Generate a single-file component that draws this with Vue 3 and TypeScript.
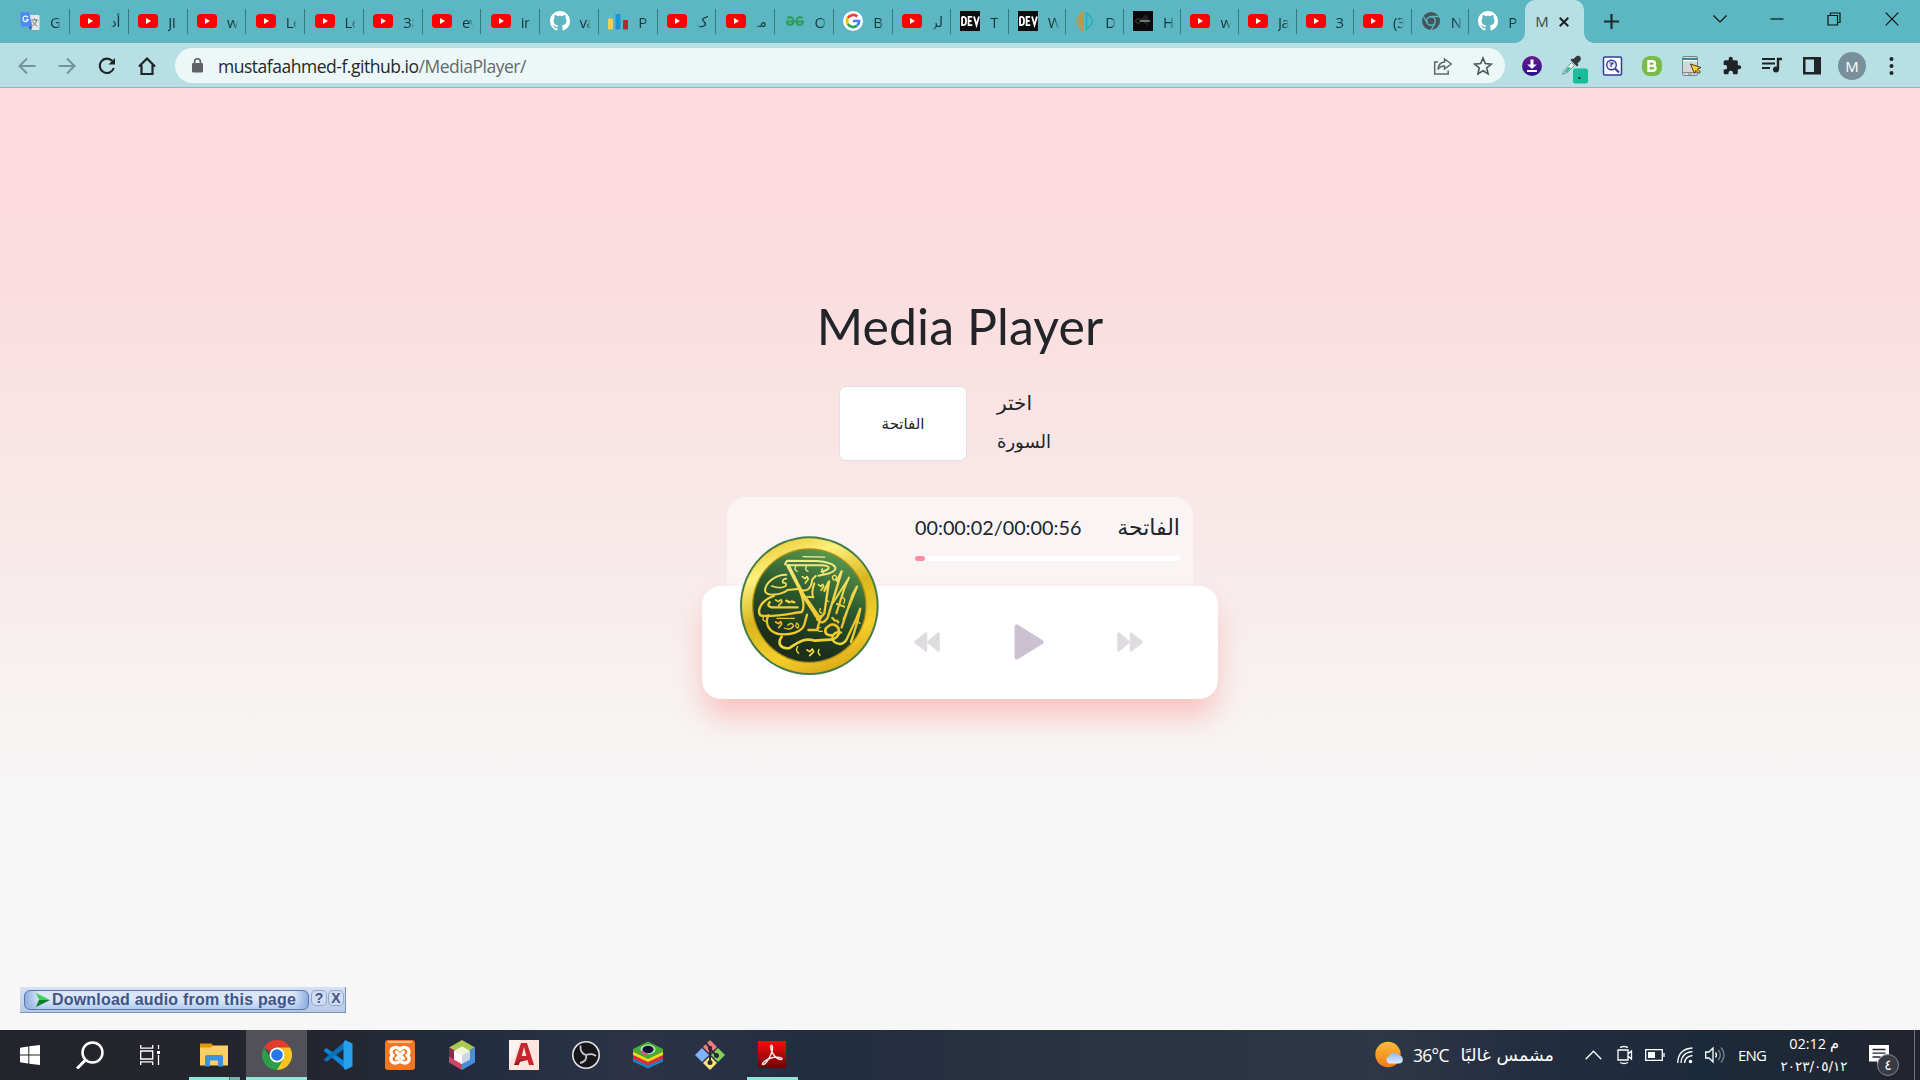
<script setup lang="ts">
interface Tab {
  icon: string
  label: string
  rtl?: boolean
}

const yt = (label: string, rtl = false): Tab => ({ icon: 'youtube', label, rtl })

const wideTabs: Tab[] = [
  yt('أد', true),
  yt('JI'),
  yt('w'),
  yt('Le'),
  yt('Le'),
  yt('38'),
  yt('ev'),
  yt('ir'),
  { icon: 'github', label: 'va' },
  { icon: 'bars', label: 'P' },
  yt('ک', true),
  yt('مـ', true),
  { icon: 'geeks', label: 'O' },
  { icon: 'google', label: 'B' },
  yt('لر', true),
]

const narrowTabs: Tab[] = [
  { icon: 'dev', label: 'T' },
  { icon: 'dev', label: 'W' },
  { icon: 'dd', label: 'D' },
  { icon: 'dark', label: 'H' },
  yt('w'),
  yt('Ja'),
  yt('3'),
  yt('(3'),
  { icon: 'chromegray', label: 'N' },
]

const extensions: string[] = ['download', 'dropper', 'inspect', 'bee', 'clicker', 'puzzle', 'queue', 'panel']

const apps: { icon: string; state?: string }[] = [
  { icon: 'explorer', state: 'grouped' },
  { icon: 'chrome', state: 'active' },
  { icon: 'vscode' },
  { icon: 'xampp' },
  { icon: 'netbeans' },
  { icon: 'autocad' },
  { icon: 'obs' },
  { icon: 'bluestacks' },
  { icon: 'git' },
  { icon: 'acrobat', state: 'open' },
]

const progress = 3.8
</script>

<template>
  <svg class="defs" width="0" height="0" aria-hidden="true">
    <defs>
      <linearGradient id="gold" x1="0.2" y1="0" x2="0.6" y2="1">
        <stop offset="0" stop-color="#e9c62d" />
        <stop offset="0.22" stop-color="#fdf17c" />
        <stop offset="0.5" stop-color="#d8b71d" />
        <stop offset="0.8" stop-color="#f5cf2b" />
        <stop offset="1" stop-color="#dfab1a" />
      </linearGradient>
      <linearGradient id="leaf" x1="0.7" y1="0" x2="0.4" y2="0.85">
        <stop offset="0" stop-color="#5b9c50" />
        <stop offset="0.5" stop-color="#2c5a2e" />
        <stop offset="1" stop-color="#1c2f1a" />
      </linearGradient>
      <linearGradient id="ink" gradientUnits="userSpaceOnUse" x1="0" y1="90" x2="0" y2="390">
        <stop offset="0" stop-color="#f4ee9a" />
        <stop offset="0.35" stop-color="#f3d84a" />
        <stop offset="0.7" stop-color="#ecc02c" />
        <stop offset="1" stop-color="#efe53c" />
      </linearGradient>
      <linearGradient id="sun" x1="0" y1="0" x2="0" y2="1">
        <stop offset="0" stop-color="#f9bd36" />
        <stop offset="1" stop-color="#f27a1a" />
      </linearGradient>
      <linearGradient id="cloud" x1="0" y1="0" x2="0" y2="1">
        <stop offset="0" stop-color="#8db8f0" />
        <stop offset="1" stop-color="#e2edfb" />
      </linearGradient>
      <linearGradient id="violet" x1="0" y1="0" x2="0" y2="1">
        <stop offset="0" stop-color="#6a1b8a" />
        <stop offset="1" stop-color="#2a1291" />
      </linearGradient>
      <linearGradient id="red" x1="0" y1="0" x2="0" y2="1">
        <stop offset="0" stop-color="#f40d0d" />
        <stop offset="1" stop-color="#6c0306" />
      </linearGradient>
    </defs>

    <symbol id="translate" viewBox="0 0 20 20">
      <path d="M9 4h9.500q1 0 1 1v13q0 1-1 1H12z" fill="#e4e6e8" />
      <path d="M1.500 1h7.500l3.500 14.500H2q-1.500 0-1.500-1.500V2q0-1 1-1" fill="#4b8bf5" />
      <path d="M8.500 15.500h4l-2.500 3.500z" fill="#3357c2" />
      <path d="M8 6.400A2.700 2.700 0 1 0 8.300 8.600H5.900" stroke="#fff" stroke-width="1.200" fill="none" />
      <path d="M11.500 9h6.500M14.700 7.600V9M16.800 9c-.7 3-2.500 4.800-4 5.500M12.800 10.500c1 2 2.400 3.500 4.400 4.500" stroke="#6d7478" stroke-width="1" fill="none" />
    </symbol>
    <symbol id="youtube" viewBox="0 0 20 20">
      <rect x="0" y="3" width="20" height="14" rx="3.500" fill="#f00" />
      <path d="M8 7l5 3-5 3z" fill="#fff" />
    </symbol>
    <symbol id="github" viewBox="0 0 16 16">
      <path fill="#fff" d="M8 0C3.580 0 0 3.580 0 8c0 3.540 2.290 6.530 5.470 7.590.4.070.550-.170.550-.380 0-.190-.010-.820-.010-1.490-2.010.370-2.530-.490-2.690-.940-.090-.230-.480-.940-.820-1.130-.280-.150-.680-.520-.010-.530.630-.010 1.080.580 1.230.820.720 1.210 1.870.870 2.330.660.070-.520.280-.870.510-1.070-1.780-.2-3.640-.890-3.640-3.950 0-.870.310-1.590.820-2.150-.080-.2-.360-1.020.080-2.120 0 0 .670-.210 2.200.820.640-.180 1.320-.270 2-.270s1.360.090 2 .270c1.530-1.040 2.200-.820 2.200-.820.440 1.100.160 1.920.080 2.120.510.560.820 1.270.820 2.150 0 3.070-1.870 3.750-3.650 3.950.290.250.540.730.540 1.480 0 1.070-.010 1.930-.010 2.200 0 .210.150.460.550.380A8.010 8.010 0 0 0 16 8c0-4.420-3.580-8-8-8z" />
    </symbol>
    <symbol id="bars" viewBox="0 0 20 20">
      <rect x="0" y="7.500" width="5" height="11" rx="1" fill="#f6cf52" />
      <rect x="7.500" y="3" width="5" height="15.500" rx="1" fill="#1a94d6" />
      <rect x="15" y="9" width="5" height="9.500" rx="1" fill="#b8242c" />
    </symbol>
    <symbol id="geeks" viewBox="0 0 20 20">
      <path d="M2.500 7.300Q5 5 7.300 7.200Q8.700 8.800 8.500 10.500Q8 14 5 13.900Q2 13.800 2 10.500H18Q18 13.800 15 13.900Q12 14 11.500 10.500Q11.300 8.800 12.700 7.200Q15 5 17.500 7.300" fill="none" stroke="#2f9b5d" stroke-width="2" />
    </symbol>
    <symbol id="google" viewBox="0 0 20 20">
      <circle cx="10" cy="10" r="10" fill="#fff" />
      <path d="M4.800 7A6.200 6.200 0 0 1 14.300 5.600" fill="none" stroke="#ea4335" stroke-width="2.700" />
      <path d="M4.800 7a6.200 6.200 0 0 0 0 6" fill="none" stroke="#fbbc05" stroke-width="2.700" />
      <path d="M4.800 13a6.200 6.200 0 0 0 9.300 1.600" fill="none" stroke="#34a853" stroke-width="2.700" />
      <path d="M14.100 14.600A6.200 6.200 0 0 0 16.100 10H10" fill="none" stroke="#4285f4" stroke-width="2.700" />
    </symbol>
    <symbol id="dev" viewBox="0 0 20 20">
      <path d="M0 0h20v20H0z" fill="#0b0d0d" />
      <path d="M2 5.800V14.200H3Q6 14.200 6 11V9Q6 5.800 3 5.800H2M12.300 5.800H8.600V14.200H12.300M8.600 10H11.600M14 5.500L16.500 14L19 5.500" fill="none" stroke="#fff" stroke-width="1.800" />
    </symbol>
    <symbol id="dd" viewBox="0 0 20 20">
      <path d="M8 .8Q2.300 6 2.300 10T8 19.200zM5.300 5v10" fill="none" stroke="#c4963c" stroke-width="1.600" />
      <path d="M11.500 1.500V18.500Q17.500 13 17.500 10T11.500 1.500" fill="none" stroke="#20b2bb" stroke-width="1.600" />
    </symbol>
    <symbol id="dark" viewBox="0 0 20 20">
      <path d="M0 0h20v20H0z" fill="#0a0a0c" />
      <path d="M7 9L13 3l2 3v9" fill="#212126" />
      <circle cx="5" cy="10" r="2.300" fill="none" stroke="#444" />
      <path d="M7 10h10" stroke="#999" stroke-width="1.400" />
    </symbol>
    <symbol id="chromegray" viewBox="0 0 20 20">
      <circle cx="10" cy="10" r="9" fill="#43555b" />
      <circle cx="10" cy="10" r="4.300" fill="none" stroke="#5cb7c2" stroke-width="1.400" />
      <path d="M10 5.500h8M6.200 12.300L2.500 5.500M14 12.300L10 19" stroke="#5cb7c2" stroke-width="1.300" />
    </symbol>

    <symbol id="download" viewBox="0 0 28 28">
      <circle cx="14" cy="14" r="10" fill="url(#violet)" />
      <path d="M12.500 7.500h3v5h3.200L14 17l-4.700-4.500h3.200zM9 18h10v2H9z" fill="#fff" />
    </symbol>
    <symbol id="dropper" viewBox="0 0 28 28" overflow="visible">
      <path d="M4.500 22.500l1.500-4L13.500 10.500l3 3L9 20.500z" fill="#e6f4f1" stroke="#7c8c90" />
      <path d="M6 20.500L10 15l3 1-4.500 4.500z" fill="#2cba9c" />
      <path d="M12.500 8l6.500 6.500 1.500-1.500-1-1.500 2.500-2.500c3-3.200-1.500-7-4.200-4.200L15.500 7 14 6.500z" fill="#333a3e" />
      <rect x="15" y="16.500" width="15" height="15" rx="2" fill="#1abc9c" />
      <path d="M20.500 25h2v2h-2z" fill="#123" />
    </symbol>
    <symbol id="inspect" viewBox="0 0 28 28">
      <rect x="5.500" y="5" width="18" height="18" rx="1.500" fill="#fff" stroke="#303b9d" stroke-width="1.500" />
      <circle cx="13.500" cy="13" r="4.800" fill="#e9ecff" stroke="#333c94" stroke-width="1.400" />
      <path d="M17 16.500l4 4" stroke="#333c94" stroke-width="2" />
      <path d="M11.500 11h3.500l-2 2v2" stroke="#303b9d" fill="none" stroke-width="1.200" />
    </symbol>
    <symbol id="bee" viewBox="0 0 28 28">
      <rect x="4" y="4" width="20" height="20" rx="8" fill="#78bb48" />
      <path d="M10.500 9.200h3.500q3 0 3 2.300t-3 2.400h-3.500zM10.500 13.900h4q3 0 3 2.400t-3 2.500h-4z" fill="none" stroke="#fff" stroke-width="2.400" />
    </symbol>
    <symbol id="clicker" viewBox="0 0 28 28">
      <rect x="4.500" y="4.500" width="15" height="19" rx="1.500" fill="#d3d7d9" stroke="#7b8388" />
      <path d="M5 6h14v2.500H5z" fill="#2f8f9b" />
      <path d="M5 8h14v1.200H5z" fill="#fff" />
      <path d="M5 20.500h14M10 22h4" stroke="#888" />
      <path d="M12.500 12l10.500 3.500-3.500 1.500 3 3-1.500 1.500-3-3-1.500 3z" fill="#ffcb2d" stroke="#3a3010" stroke-width=".9" />
    </symbol>
    <symbol id="puzzle" viewBox="0 0 24 24">
      <path fill="#202427" d="M20.500 11H19V7c0-1.100-.9-2-2-2h-4V3.500a2.500 2.500 0 0 0-5 0V5H4c-1.100 0-2 .9-2 2v3.800h1.500a2.700 2.700 0 0 1 0 5.400H2V20c0 1.100.9 2 2 2h3.800v-1.500a2.700 2.700 0 0 1 5.400 0V22H17c1.100 0 2-.9 2-2v-4h1.500a2.500 2.500 0 0 0 0-5" />
    </symbol>
    <symbol id="queue" viewBox="0 0 28 28">
      <path d="M4 7h13M4 11.500h13M4 16h8" stroke="#202427" stroke-width="2" />
      <path d="M24 7h-4v10" fill="none" stroke="#202427" stroke-width="2.400" />
      <circle cx="18" cy="17.500" r="3" fill="#202427" />
    </symbol>
    <symbol id="panel" viewBox="0 0 28 28">
      <path d="M5 5h18v17.500H5zm2.500 2.500V20H16V7.500z" fill="#202427" fill-rule="evenodd" />
    </symbol>

    <symbol id="explorer" viewBox="0 0 30 30">
      <path d="M1 3.500h11.500l1.500 2v5H1z" fill="#e29a04" />
      <path d="M1 7.500h11l2-2h15V25.500H1z" fill="#fdd061" />
      <path d="M6 25.500V17q0-2 2-2h14q2 0 2 2v9.500h-5V20.500h-8v6H6z" fill="#3b93df" />
    </symbol>
    <symbol id="chrome" viewBox="0 0 30 30">
      <path d="M15 15L2 7.500A15 15 0 0 1 28 7.500z" fill="#e33b2e" />
      <path d="M15 15V7.500H28A15 15 0 0 1 15 30z" fill="#fcc31e" />
      <path d="M15 15l6.500 3.750L15 30A15 15 0 0 1 2 7.500l6.500 11.250z" fill="#2c9e4b" />
      <circle cx="15" cy="15" r="7.500" fill="#fff" />
      <circle cx="15" cy="15" r="5.800" fill="#2678e8" />
    </symbol>
    <symbol id="vscode" viewBox="0 0 30 30">
      <path d="M.5 10.500l3-2.500 19 14v7z" fill="#0b86da" />
      <path d="M.5 19.500l3 2.500 19-14V1z" fill="#0b70b8" />
      <path d="M22 0l7.500 3.500v23L22 30l-1.500-3V3z" fill="#27a0ee" />
    </symbol>
    <symbol id="xampp" viewBox="0 0 30 30">
      <rect width="30" height="30" rx="3" fill="#f37623" />
      <path d="M3 2h24" stroke="#ffb98a" stroke-width="2" />
      <path d="M15 9.800C12.500 6 6 7 6 11.500C6 13.500 7 14.800 8 15.300C6 16.500 5.500 18.500 6.300 20.500C8 24.200 13.500 23.500 15 20C16.500 23.500 22 24.200 23.700 20.500C24.500 18.500 24 16.500 22 15.300C23 14.800 24 13.500 24 11.500C24 7 17.500 6 15 9.800M11.500 12L18.500 18.500M18.500 12L11.500 18.500" fill="none" stroke="#fff" stroke-width="3.300" stroke-linejoin="round" stroke-linecap="round" />
    </symbol>
    <symbol id="netbeans" viewBox="0 0 30 30">
      <path d="M15 0l13 7.500-13 7.500L2 7.500z" fill="#adc84f" />
      <path d="M2 7.500L15 15v15L2 22.500z" fill="#cf4767" />
      <path d="M2 7.500l5 3v9l-5-3z" fill="#8c2a50" />
      <path d="M28 7.500L15 15v15l13-7.500z" fill="#468fdc" />
      <path d="M15 6.500l8 4.500v8.500L15 24l-8-4.500V11z" fill="#cdd8de" />
      <path d="M15 6.500l8 4.500-8 4.500L7 11z" fill="#f1f4dc" />
      <path d="M7 11l8 4.500V24l-8-4.500z" fill="#fff" />
    </symbol>
    <symbol id="autocad" viewBox="0 0 30 30">
      <path d="M0 0h30v30H0z" fill="#fbe5de" />
      <path d="M0 0h12L3 20 0 19z" fill="#fff3ef" />
      <path d="M5 25L12 3h6l7 22h-5l-1.500-5h-7L10 25zM12.800 16h4.600L15 7z" fill="#c8262f" fill-rule="evenodd" />
      <path d="M5 25l6.500-5h7L10 22l-1 3z" fill="#8f131c" />
    </symbol>
    <symbol id="obs" viewBox="0 0 30 30">
      <circle cx="15" cy="15" r="13.200" fill="#17171a" stroke="#e4e4e6" stroke-width="1.600" />
      <path d="M9.500 5.500C9 11 11.500 14 15 15C19 14.500 21 12.500 25 16M15 15C16 19 14 22 9 23" fill="none" stroke="#c7c7ca" stroke-width="1.800" />
    </symbol>
    <symbol id="bluestacks" viewBox="0 0 30 30">
      <path d="M0 18l15 7L30 18v3.500l-15 7L0 21.500z" fill="#1586c9" />
      <path d="M0 15l15 7 15-7v3.500l-15 7L0 18.500z" fill="#e42a34" />
      <path d="M0 11.500l15 7 15-7v3.500l-15 7L0 15z" fill="#ffd61c" />
      <path d="M15 1.500L30 9v2.500l-15 7.500-15-7.500V9z" fill="#48ae33" />
      <ellipse cx="15" cy="9.500" rx="7.500" ry="5" fill="#b6dfb9" />
      <ellipse cx="15" cy="9.500" rx="5.500" ry="3.800" fill="#111237" />
      <path d="M8 11q3 4 7 3" stroke="#ef39a2" fill="none" stroke-width="1.500" />
    </symbol>
    <symbol id="git" viewBox="0 0 30 30">
      <path d="M15 0l7 7-7 7-7-7z" fill="#f07b7f" />
      <path d="M7 8l7 7-7 7-7-7z" fill="#80b3fb" />
      <path d="M23 8l7 7-7 7-7-7z" fill="#85d058" />
      <path d="M15 16l7 7-7 7-7-7z" fill="#ffe07a" />
      <path d="M11 3l4 5v15M15 9l6 6" stroke="#262b3b" stroke-width="2" fill="none" />
      <circle cx="15" cy="8" r="2.200" fill="#262b3b" /><circle cx="15" cy="22.500" r="2.500" fill="#262b3b" /><circle cx="21.500" cy="15.500" r="2.500" fill="#262b3b" />
    </symbol>
    <symbol id="acrobat" viewBox="0 0 30 30">
      <path d="M1 1h28v27H1z" fill="url(#red)" />
      <path d="M14 5.500C12.500 11 19 20 24.500 19.500C27 18 20 16 14 18C8 20 4 24 6 24.500C9 25 16 13 15.500 7Q15 4.500 14 5.500" fill="none" stroke="#fbeeee" stroke-width="1.400" />
    </symbol>
  </svg>

  <div class="desktop">
    <header class="browser">
      <div class="tabs">
        <div class="tab first">
          <svg class="favicon"><use href="#translate" /></svg>
          <span class="tab-label">G</span>
        </div>
        <div v-for="(t, i) in wideTabs" :key="'w' + i" class="tab wide">
          <svg class="favicon"><use :href="'#' + t.icon" /></svg>
          <span class="tab-label" :class="{ rtl: t.rtl }">{{ t.label }}</span>
        </div>
        <div v-for="(t, i) in narrowTabs" :key="'n' + i" class="tab narrow">
          <svg class="favicon"><use :href="'#' + t.icon" /></svg>
          <span class="tab-label">{{ t.label }}</span>
        </div>
        <div class="tab last">
          <svg class="favicon"><use href="#github" /></svg>
          <span class="tab-label">P</span>
        </div>
        <div class="tab-active">
          <span class="active-label">M</span>
          <svg width="10" height="10" viewBox="0 0 10 10"><path d="M.7.7l8.600 8.600M9.300.7L.7 9.300" stroke="#1c2226" stroke-width="2" /></svg>
        </div>
        <svg class="plus" width="15" height="15" viewBox="0 0 15 15"><path d="M7.500 0v15M0 7.500h15" stroke="#1b2b2f" stroke-width="2.200" /></svg>
        <div class="window-buttons">
          <svg viewBox="0 0 14 14"><path d="M.5 3.500l6.500 6.500 6.500-6.500" /></svg>
          <svg viewBox="0 0 14 14"><path d="M.5 7h13" stroke-width="1.200" /></svg>
          <svg viewBox="0 0 14 14"><path d="M1 3.500h9.500V13H1zM3.500 3.500V1H13v9.500h-2.500" /></svg>
          <svg viewBox="0 0 14 14"><path d="M.7.700l12.600 12.600M13.300.7L.7 13.300" /></svg>
        </div>
      </div>

      <div class="toolbar">
        <svg class="nav" viewBox="0 0 20 20"><path d="M18.500 10H3M10 2.500L2.500 10l7.500 7.500" fill="none" stroke="#75959a" stroke-width="2" /></svg>
        <svg class="nav" viewBox="0 0 20 20"><path d="M1.500 10H17M10 2.500l7.500 7.500-7.500 7.500" fill="none" stroke="#75959a" stroke-width="2" /></svg>
        <svg class="nav" viewBox="0 0 20 20">
          <path d="M16.800 12A7.200 7.200 0 1 1 15.300 5" fill="none" stroke="#202427" stroke-width="2.100" />
          <path d="M18 2V8.500H11.500z" fill="#202427" />
        </svg>
        <svg class="nav" viewBox="0 0 20 20"><path d="M2 10.500L10 2.500l8 8M4.500 9v9h11V9" fill="none" stroke="#202427" stroke-width="2.200" /></svg>
        <div class="omnibox">
          <svg width="11" height="15" viewBox="0 0 11 15"><rect y="5" width="11" height="9.500" rx="1.300" fill="#5f6368" /><path d="M2.600 6V3.700a2.900 2.900 0 0 1 5.800 0V6" fill="none" stroke="#5f6368" stroke-width="1.600" /></svg>
          <span class="url">mustafaahmed-f.github.io<span class="path">/MediaPlayer/</span></span>
          <svg class="share" width="20" height="20" viewBox="0 0 20 20"><path d="M5 6H1.700v12h13.500v-3.500M11.500 3l6.700 5-6.700 5v-3q-4.500 0-6.500 3.500q.5-7 6.500-7.500z" fill="none" stroke="#5f6368" stroke-width="1.500" /></svg>
          <svg class="star" width="20" height="20" viewBox="0 0 20 20"><path d="M10 2l2.300 5.600 6 .5-4.600 3.900 1.400 5.900L10 14.800l-5.100 3.100L6.300 12 1.700 8.100l6-.5z" fill="none" stroke="#4f5559" stroke-width="1.600" /></svg>
        </div>
        <div class="extensions">
          <span v-for="e in extensions" :key="e" class="ext"><svg :class="e"><use :href="'#' + e" /></svg></span>
          <span class="ext"><span class="avatar">M</span></span>
          <span class="ext"><svg viewBox="0 0 28 28"><g fill="#202427"><circle cx="13.500" cy="7" r="2" /><circle cx="13.500" cy="14" r="2" /><circle cx="13.500" cy="21" r="2" /></g></svg></span>
        </div>
      </div>
    </header>

    <main class="page">
      <h1>Media Player</h1>
      <div class="chooser">
        <div class="select">الفاتحة</div>
        <div class="prompt"><span class="choose">اختر</span><br />السورة</div>
      </div>

      <section class="player">
        <div class="info">
          <div class="info-row">
            <span class="time">00:00:02/00:00:56</span>
            <span class="track-name">الفاتحة</span>
          </div>
          <div class="track"><div class="fill" :style="{ width: progress + '%' }"></div></div>
        </div>
        <div class="controls">
          <svg width="26" height="20" viewBox="0 0 26 20"><path d="M12 1.500v17L1.500 10zM24.500 1.500v17L14.500 10z" fill="#e0dbe0" stroke="#e0dbe0" stroke-width="2.500" stroke-linejoin="round" /></svg>
          <svg width="30" height="36" viewBox="0 0 30 36"><path d="M3 3v30l24-15z" fill="#ccc1d0" stroke="#ccc1d0" stroke-width="5" stroke-linejoin="round" /></svg>
          <svg width="26" height="20" viewBox="0 0 26 20"><path d="M1.500 1.500v17L11.500 10zM14 1.500v17L24.500 10z" fill="#e0dbe0" stroke="#e0dbe0" stroke-width="2.500" stroke-linejoin="round" /></svg>
        </div>
        <svg class="emblem" viewBox="0 0 480 480">
          <circle cx="235" cy="239" r="208" fill="#467c48" />
          <circle cx="235" cy="239" r="202" fill="url(#gold)" />
          <circle cx="235" cy="239" r="172" fill="#a98c14" />
          <circle cx="235" cy="239" r="168" fill="url(#leaf)" />
          <g fill="none" stroke="url(#ink)" stroke-linecap="round" stroke-linejoin="round">
            <path stroke-width="4" d="M216 92L281 93.500" />
            <path stroke-width="6" d="M162 115L168 104L258 105C318 110 330 132 290 143L262 149M168 118L273 118C300 120 300 130 272 137" />
            <path stroke-width="11" d="M172 120L215 205L262 272" />
            <path stroke-width="6" d="M166 146C128 146 102 174 102 194C106 212 150 208 170 192L206 188" />
            <path stroke-width="5" d="M166 158Q154 158 155 170Q170 170 164 180Q150 190 122 180" />
            <path stroke-width="6" d="M206 190Q238 205 244 160L254 150M250 172Q240 200 247 214L230 212" />
            <path stroke-width="7" d="M128 210C94 222 76 250 88 268C116 276 180 262 212 258Q226 240 205 190M116 229Q106 240 121 244L200 244" />
            <path stroke-width="7" d="M112 268C100 292 114 318 142 324C176 328 212 320 220 296L228 266" />
            <path stroke-width="4" d="M138 277H190M170 298Q182 286 188 300Q178 314 160 306M197 291Q190 304 201 306Q207 298 197 291" />
            <path stroke-width="7" d="M220 216L250 263Q262 290 280 262L294 166L280 194" />
            <path stroke-width="7" d="M232 312L258 312L270 270M258 280Q275 300 290 275L332 136L318 164" />
            <path stroke-width="6" d="M306 230L354 155L342 182L316 262M318 234L340 242" />
            <path stroke-width="7" d="M338 280L378 182L364 208L332 304" />
            <path stroke-width="7" d="M360 348Q380 290 388 248L376 278L346 342Q332 362 310 348C296 334 310 314 330 320" />
            <path stroke-width="8" d="M152 332C138 352 148 370 176 366C202 348 220 334 252 344L306 340Q330 330 322 306Q306 284 284 308Q278 330 306 328" />
            <path stroke-width="4" d="M194 122q-6 10 5 14M226 122q-6 10 5 14M274 128q-6 10 5 14M288 213q-6 10 5 14M268 248q-6 10 5 14M382 278q-6 10 5 14M200 362q-8 12 3 20M264 370q-6 10 3 18M98 272q-6 10 5 14" />
            <path stroke-width="5" d="M214 152l8 6 6-6 4 7-9 12M262 176l7 5 6-6 3 7-8 11M134 222l8 5 8-6 3 7-10 11M134 288l8 5 7-6 3 7-9 11M228 372l8 5 8-8 4 8-12 12" />
            <path stroke-width="7" d="M166 224l10 5M182 226l8 3M304 276l8 8M318 284l4 5" />
            <path stroke-width="4" d="M310 148a6 7 0 1 0 1 0M334 214q12 4 4 18M268 304q-12 2-4 12h10" />
          </g>
        </svg>
      </section>

      <div class="grabber">
        <div class="grab-button">
          <svg width="16" height="16" viewBox="0 0 16 16"><path d="M1 1l14 7-14 7 3-7z" fill="#38d84a" /><path d="M15 8L1 15l3-7z" fill="#187a38" /></svg>
          <span>Download audio from this page</span>
        </div>
        <span class="mini">?</span>
        <span class="mini">X</span>
      </div>
    </main>

    <footer class="taskbar">
      <div class="task">
        <svg width="20" height="20" viewBox="0 0 20 20"><path d="M0 2.700l8.300-1.200v8H0zM9.300 1.300L20 0v9.500H9.300zM0 10.500h8.300v8L0 17.300zM9.300 10.500H20V20L9.300 18.700z" fill="#fff" /></svg>
      </div>
      <div class="task">
        <svg width="28" height="28" viewBox="0 0 28 28"><circle cx="16.500" cy="11.500" r="10" fill="none" stroke="#fff" stroke-width="2.500" /><path d="M9.500 19L1 27.500" stroke="#fff" stroke-width="3" /></svg>
      </div>
      <div class="task">
        <svg width="20" height="20" viewBox="0 0 20 20" fill="none" stroke="#fff" stroke-width="1.300"><path d="M.7 0v3.200h12V0M.7 20v-3.200h12V20M.7 6h12v8H.7zM18.500 0v4M18.500 10v10" /><path d="M17 6h3v3h-3z" fill="#fff" stroke="none" /></svg>
      </div>
      <div class="apps">
        <div v-for="a in apps" :key="a.icon" class="app" :class="a.state">
          <svg><use :href="'#' + a.icon" /></svg>
        </div>
      </div>

      <div class="tray">
        <svg class="weather" width="28" height="28" viewBox="0 0 28 28"><circle cx="13" cy="13.500" r="12.700" fill="url(#sun)" /><path d="M14 22.500a4 4 0 0 1 0-7.500a5.500 5.500 0 0 1 9.800-.5a4 4 0 0 1 0 8z" fill="url(#cloud)" /></svg>
        <span class="temp">36°C</span>
        <span class="sky">مشمس غالبًا</span>
        <svg class="chev" width="17" height="10" viewBox="0 0 17 10"><path d="M.7 9.300l7.800-8 7.800 8" /></svg>
        <svg class="cam" width="16" height="20" viewBox="0 0 16 20"><path d="M1 5h10v10H1zM11 9l3.500-3v8L11 11M3 2.500q4-2 8 0M3 17.500q4 2 8 0" /></svg>
        <svg class="battery" width="20" height="12" viewBox="0 0 20 12"><path d="M.7.7h16.600v10.600H.7zM19 4v4" /><path d="M3 3h7v6H3z" fill="#fff" stroke="none" /></svg>
        <svg class="wifi" width="16" height="17" viewBox="0 0 16 17"><path d="M.7 16Q1 2 15.500 1M4 16Q4.500 5.500 15.500 4.700M7.500 16Q8 9.500 15.500 8.500" /><circle cx="13.500" cy="14.500" r="1.800" fill="#fff" stroke="none" /></svg>
        <svg class="volume" width="20" height="18" viewBox="0 0 20 18"><path d="M.7 6H4l4-4v14l-4-4H.7zM10.500 6.500q2 2.500 0 5" /><path d="M13.300 4q4 5 0 10M16 1.500q6 7.500 0 15" stroke="#7d8690" /></svg>
        <span class="lang">ENG</span>
        <div class="clock"><span class="hour" dir="ltr">02:12 <bdi>م</bdi></span><span class="date">٢٠٢٣/٠٥/١٢</span></div>
        <div class="notice">
          <svg width="20" height="20" viewBox="0 0 20 20"><path d="M0 0h20v16.500h-8.500L8 20v-3.500H0z" fill="#fff" /><path d="M3.500 4.500h13M3.500 8.200h13M3.500 12h8" stroke="#1f2632" stroke-width="1.300" /></svg>
          <span class="badge">٤</span>
        </div>
        <span class="peek"></span>
      </div>
    </footer>
  </div>
</template>

<style>
body { margin: 0; overflow: hidden; }
</style>

<style scoped>
.defs { position: absolute; }
.desktop { width: 1920px; height: 1080px; display: flex; flex-direction: column; font-family: "Open Sans", "Noto Sans", "DejaVu Sans", sans-serif; overflow: hidden; }
svg { flex: none; display: block; }

.tabs { height: 43px; background: #5cb7c2; display: flex; }
.tab { flex: none; height: 25px; margin-top: 9px; padding-left: 9px; box-sizing: border-box; border-right: 1px solid #3b7981; display: flex; align-items: center; }
.tab.first { width: 70px; padding-left: 20px; }
.tab.wide { width: 58.75px; padding-left: 9.5px; }
.tab.narrow { width: 57.55px; }
.tab.last { width: 56px; border-right: 0; }
.favicon { width: 20px; height: 20px; margin-top: -1px; }
.tab-label { margin-left: 10px; width: 11px; overflow: hidden; white-space: nowrap; font-size: 15px; line-height: 24px; letter-spacing: -0.6px; color: #17363b; -webkit-mask-image: linear-gradient(90deg, #000 60%, transparent); mask-image: linear-gradient(90deg, #000 60%, transparent); }
.tab-label.rtl { direction: rtl; font-family: "DejaVu Sans", sans-serif; font-size: 14px; -webkit-mask-image: linear-gradient(270deg, #000 60%, transparent); mask-image: linear-gradient(270deg, #000 60%, transparent); }
.tab-active { position: relative; flex: none; width: 59px; height: 43px; background: #b8e0e4; border-radius: 10px 10px 0 0; display: flex; align-items: center; box-sizing: border-box; padding-left: 10px; gap: 11px; }
.tab-active::before, .tab-active::after { content: ""; position: absolute; bottom: 0; width: 10px; height: 10px; }
.tab-active::before { left: -10px; background: radial-gradient(circle at 0 0, transparent 9.500px, #b8e0e4 10px); }
.tab-active::after { right: -10px; background: radial-gradient(circle at 100% 0, transparent 9.500px, #b8e0e4 10px); }
.active-label { width: 13px; font-size: 15px; line-height: 24px; color: #3c4a4d; margin-top: -1px; }
.plus { margin: 14px 0 0 20px; }
.window-buttons { margin: 11.500px 21.500px 0 auto; display: flex; gap: 43.300px; }
.window-buttons svg { width: 14px; height: 14px; fill: none; stroke: #111; stroke-width: 1.200; }

.toolbar { height: 45px; box-sizing: border-box; border-bottom: 1px solid #94b5b9; background: #b8e0e4; display: flex; align-items: center; padding-left: 17px; }
.nav { width: 20px; height: 20px; margin-right: 20px; margin-top: 1px; }
.omnibox { width: 1330px; height: 35px; margin-left: -2px; margin-top: 1px; border-radius: 18px; background: #ecf7f8; box-sizing: border-box; padding: 0 12px 0 17px; display: flex; align-items: center; }
.url { margin-left: 15px; font-size: 17.5px; letter-spacing: -0.48px; color: #23272a; line-height: 30px; }
.path { color: #63696d; }
.share { margin-left: auto; margin-right: 20px; }
.extensions { display: flex; margin-left: 7px; margin-top: 1px; }
.ext { width: 40px; height: 32px; display: flex; align-items: center; justify-content: center; }
.ext svg { width: 28px; height: 28px; overflow: visible; }
.ext svg.puzzle { width: 20px; height: 20px; }
.avatar { width: 28px; height: 28px; border-radius: 50%; background: #78909c; color: #fff; font-size: 15px; line-height: 28px; text-align: center; }

.page { position: relative; height: 942px; box-sizing: border-box; padding-top: 208px; background: linear-gradient(180deg, #fddbde 0%, #fbdcde 20%, #fae3e3 33%, #f8eaea 50%, #f7f3f2 66%, #f7f7f7 78%); display: flex; flex-direction: column; align-items: center; color: #212529; font-family: Lato, "DejaVu Sans", sans-serif; }
h1 { margin: 0; font-weight: 400; font-size: 50px; line-height: 60px; letter-spacing: 0.1px; }
.chooser { margin-top: 30px; width: 242px; height: 75px; display: flex; align-items: center; }
.select { width: 128px; height: 75px; box-sizing: border-box; background: #fff; border: 1px solid #dee2e6; border-radius: 7px; text-align: center; font-size: 15px; line-height: 72px; }
.prompt { margin-left: 30px; margin-top: -4px; font-size: 18px; line-height: 38px; }
.choose { font-size: 20px; }

.player { position: relative; margin-top: 36px; width: 516px; display: flex; flex-direction: column; align-items: center; }
.info { width: 466px; height: 89px; box-sizing: border-box; background: #fbf4f4; border-radius: 19px 19px 0 0; padding: 15px 13px 0 188px; }
.info-row { height: 30px; display: flex; justify-content: space-between; align-items: center; }
.time { font-size: 19.8px; line-height: 30px; }
.track-name { font-size: 22px; line-height: 30px; }
.track { margin-top: 14px; height: 5px; border-radius: 3px; background: #fff; }
.fill { height: 5px; border-radius: 3px; background: #ff8ca7; }
.controls { width: 516px; height: 113px; box-sizing: border-box; background: #fff; border-radius: 19px; box-shadow: 0 19px 30px -3px rgba(255, 88, 88, 0.33); padding: 0 75px 1px 212px; display: flex; align-items: center; justify-content: space-between; }
.emblem { position: absolute; left: 28.5px; top: 28.5px; width: 160px; height: 160px; }

.grabber { position: absolute; left: 20px; top: 899px; width: 326px; height: 26px; box-sizing: border-box; background: linear-gradient(#d5e2f7, #b8c9e6); border-right: 1px solid #8092b4; border-bottom: 1px solid #8092b4; display: flex; padding: 3px 2px 0 4px; gap: 3px; font-family: "Liberation Sans", Arial, sans-serif; font-weight: 700; color: #405586; }
.grab-button { width: 286px; height: 20px; box-sizing: border-box; border: 1px solid #5a76ac; border-radius: 6px; background: linear-gradient(90deg, #8eaee0, transparent 5%, transparent 95%, #8eaee0), linear-gradient(#dbe6f6 50%, #b0cbee); display: flex; align-items: center; padding-left: 10px; font-size: 16px; letter-spacing: 0.2px; white-space: nowrap; gap: 1px; }
.mini { width: 14px; height: 14px; box-sizing: border-box; border-radius: 4px; background: #cfdcf1; box-shadow: 0 0 0 1px #92a8cf; font-size: 14px; line-height: 14px; text-align: center; margin-top: 1px; }

.taskbar { height: 50px; background: linear-gradient(90deg, #24242c 0%, #24262f 17%, #232d40 25%, #2e3347 33%, #222d40 43%, #2b3242 55%, #2e3747 72%, #222d40 80%, #1b2a3b 89%, #22242e 100%); display: flex; color: #fff; }
.task { width: 60px; height: 50px; display: flex; align-items: center; justify-content: center; }
.apps { margin-left: 3px; display: flex; }
.app { width: 62px; height: 50px; box-sizing: border-box; padding-top: 10px; display: flex; flex-direction: column; align-items: center; justify-content: space-between; }
.app svg { width: 30px; height: 30px; }
.app.active { background: #515157; background-clip: content-box; padding: 0 0 0 1px; }
.app.active svg { margin-top: 10px; }
.app.active::after, .app.open::after, .app.grouped::after { content: ""; height: 3px; width: 51px; background: #8fe5d7; }
.app.active::after { width: 61px; }
.app.grouped::after { background: linear-gradient(90deg, #8fe5d7 40px, #4c807b 40px, #4c807b 41px, #71b3a9 41px); }

.tray { margin-left: auto; display: flex; align-items: center; height: 50px; font-size: 15px; }
.tray svg { fill: none; stroke: #fff; stroke-width: 1.300; }
.tray svg.weather { stroke: none; }
.temp { width: 39px; margin-left: 10px; font-size: 17.5px; letter-spacing: -0.7px; white-space: nowrap; }
.sky { width: 92px; margin-left: 10px; font-family: "DejaVu Sans", sans-serif; font-size: 17.5px; direction: rtl; white-space: nowrap; }
.chev { margin-left: 31px; }
.cam { margin-left: 15px; }
.battery { margin-left: 12px; }
.wifi { margin-left: 12px; }
.volume { margin-left: 12px; }
.lang { width: 28px; margin-left: 13px; letter-spacing: -0.8px; }
.clock { width: 68px; margin-left: 14px; display: flex; flex-direction: column; align-items: center; font-size: 14.5px; line-height: 22px; letter-spacing: -0.6px; white-space: nowrap; }
.date { font-family: "DejaVu Sans", sans-serif; font-size: 13.500px; letter-spacing: 0; }
.notice { position: relative; margin-left: 21px; width: 20px; height: 20px; }
.tray .notice svg { stroke: none; }
.badge { position: absolute; left: 8px; top: 9px; width: 22px; height: 22px; box-sizing: border-box; border: 1px solid #85878d; border-radius: 50%; background: #3a3c44; font-family: "DejaVu Sans", sans-serif; font-size: 14px; line-height: 20px; text-align: center; }
.peek { width: 1px; height: 50px; background: #6d737d; margin-left: 25px; margin-right: 5px; }
</style>
